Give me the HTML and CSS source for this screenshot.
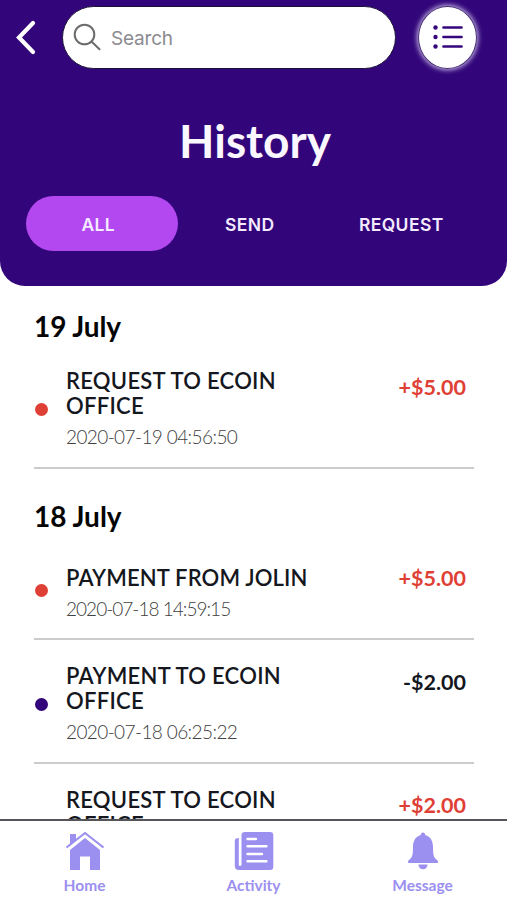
FILE: index.html
```html
<!DOCTYPE html>
<html lang="en">
<head>
<meta charset="utf-8">
<title>History</title>
<link rel="stylesheet" href="styles.css">
</head>
<body>
<div class="app">
  <header class="header">
    <div class="toolbar">
      <svg class="back" width="20" height="36" viewBox="0 0 20 36"><path d="M17 4 3 18.500 17 33" fill="none" stroke="#fff" stroke-width="4.200" stroke-linecap="round" stroke-linejoin="miter"/></svg>
      <div class="search">
        <svg width="28" height="28" viewBox="0 0 28 28" fill="none" stroke="#6c6c6c" stroke-width="2"><circle cx="11.500" cy="11.500" r="9.800"/><path d="m18.500 18.500 8 7.700" stroke-linecap="round"/></svg>
        <span>Search</span>
      </div>
      <div class="menu">
        <svg width="30" height="24" viewBox="0 0 30 24" fill="#35077c"><circle cx="2.500" cy="2.500" r="2.200"/><circle cx="2.500" cy="12" r="2.200"/><circle cx="2.500" cy="21.500" r="2.200"/><path d="M10.500 2.500h18M10.500 12h18M10.500 21.500h18" stroke="#35077c" stroke-width="2.700" stroke-linecap="round"/></svg>
      </div>
    </div>
    <h1>History</h1>
    <nav class="tabs"><span class="tab active">ALL</span><span class="tab">SEND</span><span class="tab">REQUEST</span></nav>
  </header>
  <main class="list">
    <h2 class="first">19 July</h2>
    <article class="item">
      <i class="dot"></i>
      <div class="info"><h3>REQUEST TO ECOIN<br>OFFICE</h3><time>2020-07-19 04:56:50</time></div>
      <span class="amount">+$5.00</span>
    </article>
    <h2>18 July</h2>
    <article class="item single">
      <i class="dot"></i>
      <div class="info"><h3 class="jolin">PAYMENT FROM JOLIN</h3><time class="narrow">2020-07-18 14:59:15</time></div>
      <span class="amount">+$5.00</span>
    </article>
    <article class="item debit">
      <i class="dot"></i>
      <div class="info"><h3>PAYMENT TO ECOIN<br>OFFICE</h3><time>2020-07-18 06:25:22</time></div>
      <span class="amount">-$2.00</span>
    </article>
    <article class="item last">
      <i class="dot"></i>
      <div class="info"><h3>REQUEST TO ECOIN<br>OFFICE</h3></div>
      <span class="amount">+$2.00</span>
    </article>
  </main>
  <nav class="bottom">
    <div class="link">
      <svg width="40" height="40" viewBox="0 0 40 40" fill="#9b8ff0"><path d="M5 3h6v6l-6 5zM5 19 20 7l15 12v20H25V25.500H15V39H5z"/><path d="M1.500 16.500 20 2l18.500 14.500" fill="none" stroke="#9b8ff0" stroke-width="2.200" stroke-linejoin="round"/><path d="M3.300 18 20 5l16.700 13" fill="none" stroke="#fff" stroke-width="1.500"/></svg>
      <span>Home</span>
    </div>
    <div class="link">
      <svg width="40" height="40" viewBox="0 0 40 40"><path d="M7.500 34V4Q7.500 1 11 1h25q3.300 0 3.300 3.300v31.400Q39.300 39 36 39H5Q.8 39 .8 35V9.500Q.8 7 4.800 7v27.500q1.500 1 2.700-.5z" fill="#9b8ff0"/><path d="M13.500 8h8.500M13.500 15.300h19M13.500 23h14.500M13.500 30.200h19" fill="none" stroke="#fff" stroke-width="2.400" stroke-linecap="round"/></svg>
      <span>Activity</span>
    </div>
    <div class="link">
      <svg width="40" height="40" viewBox="0 0 40 40" fill="#9b8ff0"><path d="M20 1.500c-1.500 0-2.200 1-2.200 2.500C12.500 5.500 10 10 10 16c0 8-.8 11-4.300 13.200-1.500 1.300-1 2.800.6 2.800h27.400c1.600 0 2.100-1.500.6-2.800C30.800 27 30 24 30 16c0-6-2.500-10.500-7.800-12 0-1.500-.7-2.500-2.200-2.500zM15.500 33.500h9c0 3-2 4.700-4.500 4.700s-4.500-1.700-4.500-4.700z"/></svg>
      <span>Message</span>
    </div>
  </nav>
</div>
</body>
</html>
```
FILE: styles.css
```css
* { box-sizing: border-box; }
body { margin: 0; background: #fff; font-family: Lato, "Open Sans", sans-serif; }
h1, h2, h3 { margin: 0; }
svg { display: block; flex: none; }
.app { height: 900px; display: flex; flex-direction: column; overflow: hidden; }
.header { height: 286px; flex: none; background: #32067a; border-radius: 0 0 25px 25px; }
.toolbar { display: flex; align-items: center; height: 75px; padding-left: 16px; }
.back { margin-top: -2px; }
.search { display: flex; align-items: center; gap: 10px; width: 334px; height: 63px; margin-left: 26px; padding-left: 10px; border: 1.5px solid #1b1238; border-radius: 32px; background: #fff; color: #8b8b90; font: 19px Inter, sans-serif; }
.search svg { margin-top: -2px; }
.search span { padding-top: 2px; letter-spacing: -.2px; }
.menu { display: flex; align-items: center; justify-content: center; width: 59px; height: 63px; margin-left: 22px; border: 1.5px solid #493078; border-radius: 50%; background: #fff; box-shadow: 0 0 5px 1px #cdbfea; }
.menu svg { margin-top: -2px; }
h1 { height: 121px; padding: 40px 0 0 3px; text-align: center; color: #fbf7ff; font-size: 46px; line-height: 52px; font-weight: 700; letter-spacing: 0; }
.tabs { display: flex; padding-left: 26px; }
.tab { width: 151.500px; height: 55px; line-height: 57px; text-align: center; color: #f4ebff; font-family: Inter, sans-serif; font-size: 17.500px; font-weight: 600; letter-spacing: .4px; border-radius: 28px; padding-right: 7px; }
.tab.active { background: #b348f0; }
.list { flex: 1; min-height: 0; overflow: hidden; padding: 0 33px 0 34px; }
h2 { height: 72px; padding-top: 30px; font-size: 28px; line-height: 34px; font-weight: 700; color: #050505; }
h2.first { height: 58px; padding-top: 23px; letter-spacing: -.1px; }
.item { display: flex; height: 124px; border-bottom: 2px solid #ccc; padding-top: 24px; }
.first + .item { height: 125px; }
.single { height: 99px; }
.dot { width: 13px; height: 13px; margin: 35px 18px 0 1px; border-radius: 50%; background: #df4035; flex: none; }
.single .dot { margin-top: 19px; }
.debit, .last { padding-top: 23px; }
.debit .dot { background: #32067a; }
.info { flex: 1; }
h3 { font-size: 22px; line-height: 25px; font-weight: 600; color: #14171e; white-space: nowrap; letter-spacing: .28px; }
.jolin { letter-spacing: .14px; }
time { display: block; margin-top: 6px; color: #404040; font-size: 19px; line-height: 26px; font-weight: 300; letter-spacing: -.6px; }
.narrow { letter-spacing: -.97px; }
.amount { margin-top: 6px; padding-right: 8px; font-size: 21.500px; line-height: 26px; font-weight: 700; color: #df4035; }
.single .amount { margin-top: 0; }
.last .amount { margin-top: 5px; }
.debit .amount { color: #14171e; }
.bottom { display: flex; flex: none; height: 81px; border-top: 2px solid #555459; background: #fff; }
.link { display: flex; flex: 1; flex-direction: column; align-items: center; padding-top: 10px; color: #9b8ff0; font-size: 15.500px; line-height: 20px; font-weight: 700; }
.link span { margin-top: 4px; }
```
